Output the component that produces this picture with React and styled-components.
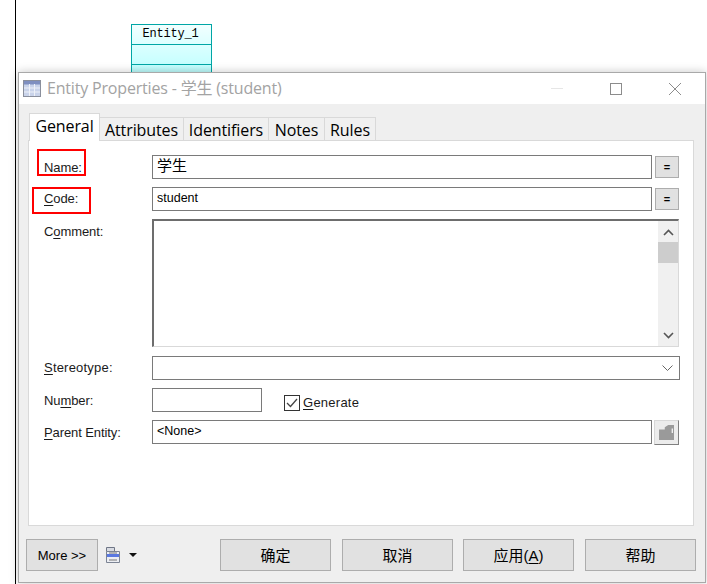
import styled, { createGlobalStyle } from "styled-components";

const Global = createGlobalStyle`
  html, body { margin: 0; padding: 0; background: #fff; }
  body { width: 707px; height: 584px; overflow: hidden; font-family: "Liberation Sans", Arial, sans-serif; }
`

const Canvas = styled.div`
  position: relative;
  width: 707px;
  height: 584px;
  overflow: hidden;
  background: #fff;
`
const CanvasEdge = styled.div`
  position: absolute;
  left: 15px;
  top: 0;
  width: 1px;
  height: 584px;
  background: #000;
`
const Entity = styled.div`
  position: absolute;
  left: 131px;
  top: 24px;
  width: 81px;
  height: 60px;
  box-sizing: border-box;
  border: 1px solid #00a6a6;
  border-bottom: 0;
  background: linear-gradient(180deg, #f2ffff 0%, #c4ffff 70%, #a8eeee 100%);
`
const EntityTitle = styled.div`
  height: 19px;
  border-bottom: 1px solid #00a6a6;
  font: 12px/18px "Liberation Mono", monospace;
  letter-spacing: -0.2px;
  padding-right: 2px;
  color: #000;
  text-align: center;
`
const EntityRow = styled.div`
  height: 19px;
  border-bottom: 1px solid #00a6a6;
`
const Dialog = styled.div`
  position: absolute;
  left: 18px;
  top: 72px;
  width: 688px;
  height: 511px;
  box-sizing: border-box;
  border: 1px solid #a9a9a9;
  background: #efefef;
  display: flex;
  flex-direction: column;
  box-shadow: 0 0 9px rgba(0, 0, 0, 0.22);
`
const TitleBar = styled.div`
  height: 31px;
  flex: none;
  background: #fff;
  display: flex;
  align-items: center;
  padding-left: 4px;
`
const TitleText = styled.span`
  margin: -3px 0 0 6px;
  font: 16px "Open Sans", "Noto Sans CJK SC", sans-serif;
  letter-spacing: -0.18px;
  color: #a3a3a3;
`
const WinButtons = styled.div`
  margin-left: auto;
  display: flex;
  align-items: center;
  svg { display: block; width: 14px; height: 14px; margin-right: 45px; }
  svg:last-child { margin-right: 23px; }
`
const TabStrip = styled.div`
  flex: none;
  display: flex;
  align-items: flex-end;
  height: 27px;
  margin: 10px 0 0 10px;
  position: relative;
  z-index: 1;
  margin-bottom: -1px;
`
const Tab = styled.div`
  box-sizing: border-box;
  width: ${(p) => p.$w}px;
  height: ${(p) => (p.$active ? 28 : 24)}px;
  border: 1px solid #d9d9d9;
  border-left: ${(p) => (p.$active ? "1px solid #d9d9d9" : "0")};
  border-bottom: ${(p) => (p.$active ? "0" : "1px solid #d9d9d9")};
  background: ${(p) => (p.$active ? "#fff" : "#f0f0f0")};
  font: 16px/${(p) => (p.$active ? 24 : 24)}px "Open Sans", sans-serif;
  letter-spacing: -0.1px;
  color: #000;
  text-align: center;
  white-space: nowrap;
`
const Panel = styled.div`
  flex: none;
  box-sizing: border-box;
  width: 666px;
  height: 386px;
  margin-left: 9px;
  border: 1px solid #d9d9d9;
  background: #fff;
  padding: 14px 0 0 15px;
  display: flex;
  flex-direction: column;
  gap: 8px;
`
const Row = styled.div`
  display: flex;
  align-items: flex-start;
  margin-top: ${(p) => p.$mt || 0}px;
`
const Label = styled.label`
  width: 108px;
  flex: none;
  font-size: 13px;
  line-height: 16px;
  padding-top: ${(p) => p.$pt ?? 4}px;
  color: #1a1a1a;
  white-space: nowrap;
  letter-spacing: ${(p) => p.$ls ?? -0.1}px;
  u { text-underline-offset: 2px; }
`
const Field = styled.div`
  box-sizing: border-box;
  width: ${(p) => p.$w}px;
  height: 24px;
  flex: none;
  border: 1px solid #7a7a7a;
  background: #fff;
  padding-left: 4px;
  font: ${(p) => p.$size || 12.5}px/20px "Liberation Sans", "Noto Sans CJK SC", sans-serif;
  color: #000;
`
const EqButton = styled.button`
  box-sizing: border-box;
  width: 24px;
  height: 22px;
  margin: 1px 0 0 3px;
  padding: 0;
  border: 1px solid #adadad;
  background: #e1e1e1;
  font: bold 11px/18px "Liberation Sans", sans-serif;
  color: #000;
`
const CommentBox = styled.div`
  box-sizing: border-box;
  width: 527px;
  height: 128px;
  border: 1px solid #d9d9d9;
  border-top: 2px solid #6d6d6d;
  border-left: 2px solid #6d6d6d;
  display: flex;
  justify-content: flex-end;
`
const Scrollbar = styled.div`
  width: 20px;
  height: 100%;
  background: #f0f0f0;
  display: flex;
  flex-direction: column;
  align-items: center;
  svg { display: block; flex: none; margin-top: 8px; }
  svg:last-child { margin-top: auto; margin-bottom: 7px; }
`
const Thumb = styled.div`
  width: 100%;
  height: 21px;
  margin-top: 6px;
  background: #cdcdcd;
`
const Select = styled(Field)`
  display: flex;
  align-items: center;
  justify-content: flex-end;
  padding-right: 6px;
`
const Generate = styled.div`
  margin: 6px 0 0 22px;
  display: flex;
  align-items: center;
  gap: 3px;
  font-size: 13px;
  line-height: 16px;
  letter-spacing: 0.25px;
  color: #1a1a1a;
  span + span { padding-top: 1px; }
  u { text-underline-offset: 2px; }
`
const CheckBox = styled.span`
  box-sizing: border-box;
  width: 16px;
  height: 16px;
  border: 1px solid #333;
  background: #fff;
  display: flex;
  align-items: center;
  justify-content: center;
`
const BrowseButton = styled.button`
  box-sizing: border-box;
  width: 25px;
  height: 25px;
  margin: 0 0 0 2px;
  padding: 0;
  border: 1px solid #a0a0a0;
  border-top-color: #d8d8d8;
  border-left-color: #d8d8d8;
  border-right-color: #808080;
  border-bottom-color: #808080;
  background: #ececec;
  display: flex;
  align-items: center;
  justify-content: center;
`
const Footer = styled.div`
  flex: none;
  display: flex;
  align-items: flex-start;
  padding: 13px 0 0 7px;
`
const Button = styled.button`
  box-sizing: border-box;
  width: ${(p) => p.$w || 111}px;
  height: 32px;
  flex: none;
  margin-left: ${(p) => p.$ml || 0}px;
  padding: 0 0 2px;
  border: 1px solid #adadad;
  background: #e1e1e1;
  font: 15px "Liberation Sans", "Noto Sans CJK SC", sans-serif;
  color: #000;
  u { text-underline-offset: 2px; }
`
const MoreButton = styled(Button)`
  font-size: 13px;
  padding: 0;
`
const ModelMenu = styled.div`
  width: 115px;
  flex: none;
  display: flex;
  align-items: center;
  height: 32px;
  padding-left: 8px;
  box-sizing: border-box;
  gap: 9px;
  svg { display: block; }
`
const Callout = styled.div`
  position: absolute;
  box-sizing: border-box;
  left: ${(p) => p.$x}px;
  top: ${(p) => p.$y}px;
  width: ${(p) => p.$w}px;
  height: 27px;
  border: 2px solid #f00;
  pointer-events: none;
`

const TableIcon = () => (
  <svg width="18" height="17" viewBox="0 0 18 17">
    <rect x="0.5" y="0.5" width="17" height="16" fill="#c9d3ea" stroke="#8a8f9c" />
    <rect x="1" y="1" width="16" height="3.5" fill="#7f8fc0" />
    <path d="M1 8h16M1 12h16M6.5 4v12M11.5 4v12" stroke="#eef1f8" strokeWidth="1" />
  </svg>
)

const ChevronUp = () => (
  <svg width="11" height="7" viewBox="0 0 11 7">
    <path d="M1 6l4.5-4.5L10 6" fill="none" stroke="#555" strokeWidth="1.6" />
  </svg>
)
const ChevronDown = () => (
  <svg width="11" height="7" viewBox="0 0 11 7">
    <path d="M1 1l4.5 4.5L10 1" fill="none" stroke="#555" strokeWidth="1.6" />
  </svg>
)

const EntityProperties = () => (
  <Dialog>
    <TitleBar>
      <TableIcon />
      <TitleText>Entity Properties - 学生 (student)</TitleText>
      <WinButtons>
        <svg viewBox="0 0 14 14"><path d="M1 6.5h12" stroke="#e6e6e6" /></svg>
        <svg viewBox="0 0 14 14"><rect x="1.5" y="1.5" width="11" height="11" fill="none" stroke="#8c8c8c" /></svg>
        <svg viewBox="0 0 14 14"><path d="M1 1l12 12M13 1L1 13" stroke="#8c8c8c" /></svg>
      </WinButtons>
    </TitleBar>
    <TabStrip>
      <Tab $active $w={71}>General</Tab>
      <Tab $w={84}>Attributes</Tab>
      <Tab $w={85}>Identifiers</Tab>
      <Tab $w={56}>Notes</Tab>
      <Tab $w={51}>Rules</Tab>
    </TabStrip>
    <Panel>
      <Row>
        <Label $pt={5}><u>N</u>ame:</Label>
        <Field $w={500} $size={15}>学生</Field>
        <EqButton>=</EqButton>
      </Row>
      <Row>
        <Label $pt={4}><u>C</u>ode:</Label>
        <Field $w={500}>student</Field>
        <EqButton>=</EqButton>
      </Row>
      <Row>
        <Label $pt={5}>C<u>o</u>mment:</Label>
        <CommentBox>
          <Scrollbar>
            <ChevronUp />
            <Thumb />
            <ChevronDown />
          </Scrollbar>
        </CommentBox>
      </Row>
      <Row $mt={1}>
        <Label $pt={4} $ls={0.2}><u>S</u>tereotype:</Label>
        <Select $w={528}>
          <svg width="11" height="6" viewBox="0 0 11 6">
            <path d="M0.5 0.5l5 5 5-5" fill="none" stroke="#666" />
          </svg>
        </Select>
      </Row>
      <Row>
        <Label $pt={5}>Nu<u>m</u>ber:</Label>
        <Field $w={110} />
        <Generate>
          <CheckBox>
            <svg width="12" height="10" viewBox="0 0 12 10">
              <path d="M1 5l3.5 3.5L11 1" fill="none" stroke="#444" strokeWidth="1.3" />
            </svg>
          </CheckBox>
          <span><u>G</u>enerate</span>
        </Generate>
      </Row>
      <Row>
        <Label $pt={5}><u>P</u>arent Entity:</Label>
        <Field $w={500}>&lt;None&gt;</Field>
        <BrowseButton>
          <svg width="15" height="15" viewBox="0 0 13 13">
            <path d="M0 4h5V2l3-2h5v13H0z" fill="#9a9a9a" />
            <path d="M11.5 3v4" stroke="#fff" />
          </svg>
        </BrowseButton>
      </Row>
    </Panel>
    <Footer>
      <MoreButton $w={72}>More &gt;&gt;</MoreButton>
      <ModelMenu>
        <svg width="14" height="16" viewBox="0 0 14 16">
          <path d="M0.5 0.5h8v4h-8z" fill="#d8dbe2" stroke="#6f7686" />
          <path d="M0.5 4.5h13v11h-13z" fill="#eceef3" stroke="#7c8494" />
          <path d="M1 8.5h12" stroke="#5a78e0" strokeWidth="3" />
          <path d="M3 6h8M3 13h8" stroke="#777" />
        </svg>
        <svg width="8" height="4" viewBox="0 0 8 4"><path d="M0 0h8L4 4z" fill="#111" /></svg>
      </ModelMenu>
      <Button $ml={7}>确定</Button>
      <Button $ml={11}>取消</Button>
      <Button $ml={10}>应用(<u>A</u>)</Button>
      <Button $ml={11}>帮助</Button>
    </Footer>
  </Dialog>
)

export default function App() {
  return (
    <Canvas>
      <Global />
      <CanvasEdge />
      <Entity>
        <EntityTitle>Entity_1</EntityTitle>
        <EntityRow />
      </Entity>
      <EntityProperties />
      <Callout $x={37} $y={149} $w={49} />
      <Callout $x={32} $y={187} $w={59} />
    </Canvas>
  )
}
